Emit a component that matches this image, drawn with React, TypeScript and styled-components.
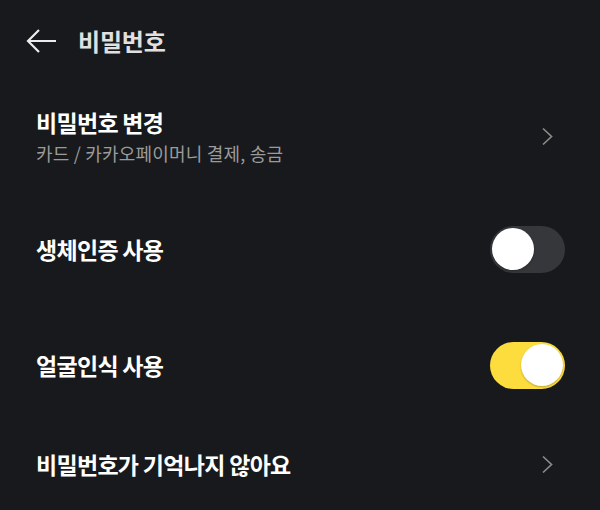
import React, { useState } from "react";
import styled, { createGlobalStyle } from "styled-components";

const GlobalStyle = createGlobalStyle`
  html, body {
    margin: 0;
    padding: 0;
    background: #17191c;
  }
  body {
    font-family: "Noto Sans CJK KR", "Noto Sans", sans-serif;
    color: #ffffff;
  }
`;

const Screen = styled.div`
  width: 600px;
  height: 510px;
  background: #17191c;
  overflow: hidden;
  display: flex;
  flex-direction: column;
`;

const Header = styled.header`
  height: 81px;
  display: flex;
  align-items: center;
  padding-left: 26px;
  gap: 21px;
`;

const BackButton = styled.button`
  border: 0;
  background: none;
  padding: 0;
  width: 31px;
  height: 26px;
  display: flex;
  align-items: center;
  color: #ececec;
  cursor: pointer;
`;

const HeaderTitle = styled.h1`
  margin: 0;
  font-size: 24px;
  font-weight: 700;
  letter-spacing: -0.2px;
  color: #e0e0e0;
`;

const Row = styled.div<{ $h: number }>`
  height: ${(p) => p.$h}px;
  display: flex;
  align-items: center;
  justify-content: space-between;
  padding: 0 35px 0 36px;
`;

const TextBlock = styled.div`
  display: flex;
  flex-direction: column;
  gap: 6px;
`;

const Title = styled.div`
  font-size: 23px;
  font-weight: 700;
  letter-spacing: -0.7px;
  line-height: 28px;
  color: #ffffff;
`;

const Sub = styled.div`
  font-size: 18px;
  letter-spacing: 0.2px;
  line-height: 22px;
  color: #9b9b9b;
`;

const ChevronBox = styled.div`
  width: 24px;
  display: flex;
  justify-content: flex-start;
  color: #8a8a8a;
`;

const Track = styled.button<{ $on: boolean }>`
  width: 75px;
  height: 47px;
  border-radius: 24px;
  border: 0;
  padding: 0 2px;
  display: flex;
  align-items: center;
  justify-content: ${(p) => (p.$on ? "flex-end" : "flex-start")};
  background: ${(p) => (p.$on ? "#fddd3e" : "#35373b")};
  cursor: pointer;
`;

const Knob = styled.span`
  width: 42px;
  height: 42px;
  border-radius: 50%;
  background: #ffffff;
  box-shadow: 0 1px 2px rgba(0, 0, 0, 0.25);
`;

const Chevron = () => (
  <ChevronBox>
    <svg width="13" height="19" viewBox="0 0 13 19" fill="none">
      <path d="M2 1.5 L10.5 9.5 L2 17.5" stroke="currentColor" strokeWidth="1.7" />
    </svg>
  </ChevronBox>
);

const Toggle = ({ initial }: { initial: boolean }) => {
  const [on, setOn] = useState(initial);
  return (
    <Track $on={on} onClick={() => setOn(!on)}>
      <Knob />
    </Track>
  );
};

export default function App() {
  return (
    <Screen>
      <GlobalStyle />
      <Header>
        <BackButton aria-label="뒤로">
          <svg width="31" height="26" viewBox="0 0 31 26" fill="none">
            <path
              d="M30 13 H2 M13 2 L2 13 L13 24"
              stroke="currentColor"
              strokeWidth="2.2"
              strokeLinejoin="miter"
            />
          </svg>
        </BackButton>
        <HeaderTitle>비밀번호</HeaderTitle>
      </Header>
      <Row $h={110}>
        <TextBlock>
          <Title>비밀번호 변경</Title>
          <Sub>카드 / 카카오페이머니 결제, 송금</Sub>
        </TextBlock>
        <Chevron />
      </Row>
      <Row $h={116}>
        <Title>생체인증 사용</Title>
        <Toggle initial={false} />
      </Row>
      <Row $h={116}>
        <Title>얼굴인식 사용</Title>
        <Toggle initial={true} />
      </Row>
      <Row $h={82}>
        <Title>비밀번호가 기억나지 않아요</Title>
        <Chevron />
      </Row>
    </Screen>
  );
}
